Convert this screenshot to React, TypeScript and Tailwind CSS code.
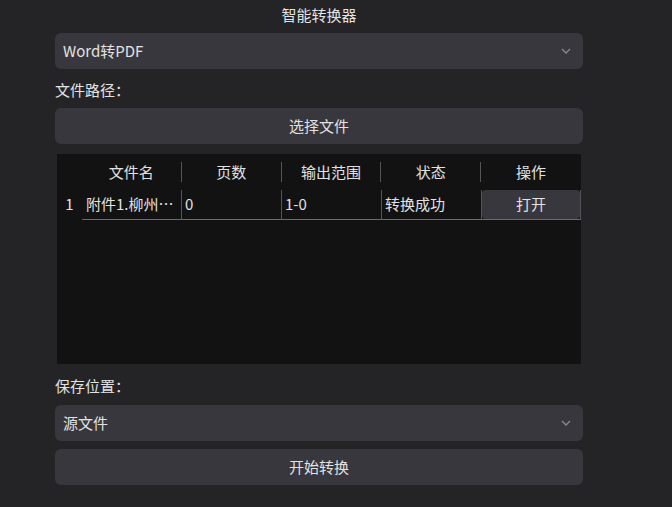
import React from "react";

const font = { fontFamily: '"Noto Sans CJK SC", "Noto Sans", sans-serif' };

function Chevron() {
  return (
    <svg width="10" height="6" viewBox="0 0 10 6" className="shrink-0">
      <path d="M1 1 L5 5 L9 1" fill="none" stroke="#8a8a8e" strokeWidth="1.3" />
    </svg>
  );
}

function Select({ value }: { value: string }) {
  return (
    <div className="flex h-[36px] items-center justify-between rounded-[6px] bg-[#38373d] pl-[8px] pr-[12px] text-[15px] text-[#e2e2e2]">
      <span>{value}</span>
      <Chevron />
    </div>
  );
}

function Button({ label }: { label: string }) {
  return (
    <div className="flex h-[36px] items-center justify-center rounded-[6px] bg-[#38373d] text-[15px] text-[#e2e2e2]">
      {label}
    </div>
  );
}

const headers = ["文件名", "页数", "输出范围", "状态", "操作"];

export default function App() {
  return (
    <div className="h-[507px] w-[672px] bg-[#242427] text-[#e2e2e2]" style={font}>
      <div className="ml-[55px] flex w-[528px] flex-col">
        <div className="flex h-[30px] items-center justify-center text-[15px]">智能转换器</div>
        <div className="mt-[3px]">
          <Select value="Word转PDF" />
        </div>
        <div className="mt-[3px] flex h-[36px] items-center text-[15px]">文件路径：</div>
        <Button label="选择文件" />

        <div className="ml-[2px] mr-[2px] mt-[10px] h-[210px] bg-[#121212] text-[15px]">
          <div className="flex h-[36px]">
            <div className="w-[25px]" />
            {headers.map((h, i) => (
              <div key={h} className="flex w-[100px] items-center">
                <div className="flex-1 text-center">{h}</div>
                {i < 4 && <div className="h-[20px] w-px bg-[#555]" />}
              </div>
            ))}
          </div>
          <div className="flex h-[30px]">
            <div className="flex w-[25px] items-center justify-center pb-[1px]">1</div>
            <div className="flex flex-1 border-b border-[#6a6a6a]">
              <div className="flex w-[100px] items-center border-r border-[#555] pl-[4px]">附件1.柳州…</div>
              <div className="flex w-[100px] items-center border-r border-[#555] pl-[3px]">0</div>
              <div className="flex w-[100px] items-center border-r border-[#555] pl-[3px]">1-0</div>
              <div className="flex w-[100px] items-center border-r border-[#555] pl-[3px]">转换成功</div>
              <div className="flex w-[99px] items-stretch border-r border-[#555]">
                <div className="flex flex-1 items-center justify-center rounded-[4px] bg-[#38373d]">打开</div>
              </div>
            </div>
          </div>
        </div>

        <div className="mt-[4px] flex h-[36px] items-center text-[15px]">保存位置：</div>
        <div className="mt-[1px]">
          <Select value="源文件" />
        </div>
        <div className="mt-[8px]">
          <Button label="开始转换" />
        </div>
      </div>
    </div>
  );
}
